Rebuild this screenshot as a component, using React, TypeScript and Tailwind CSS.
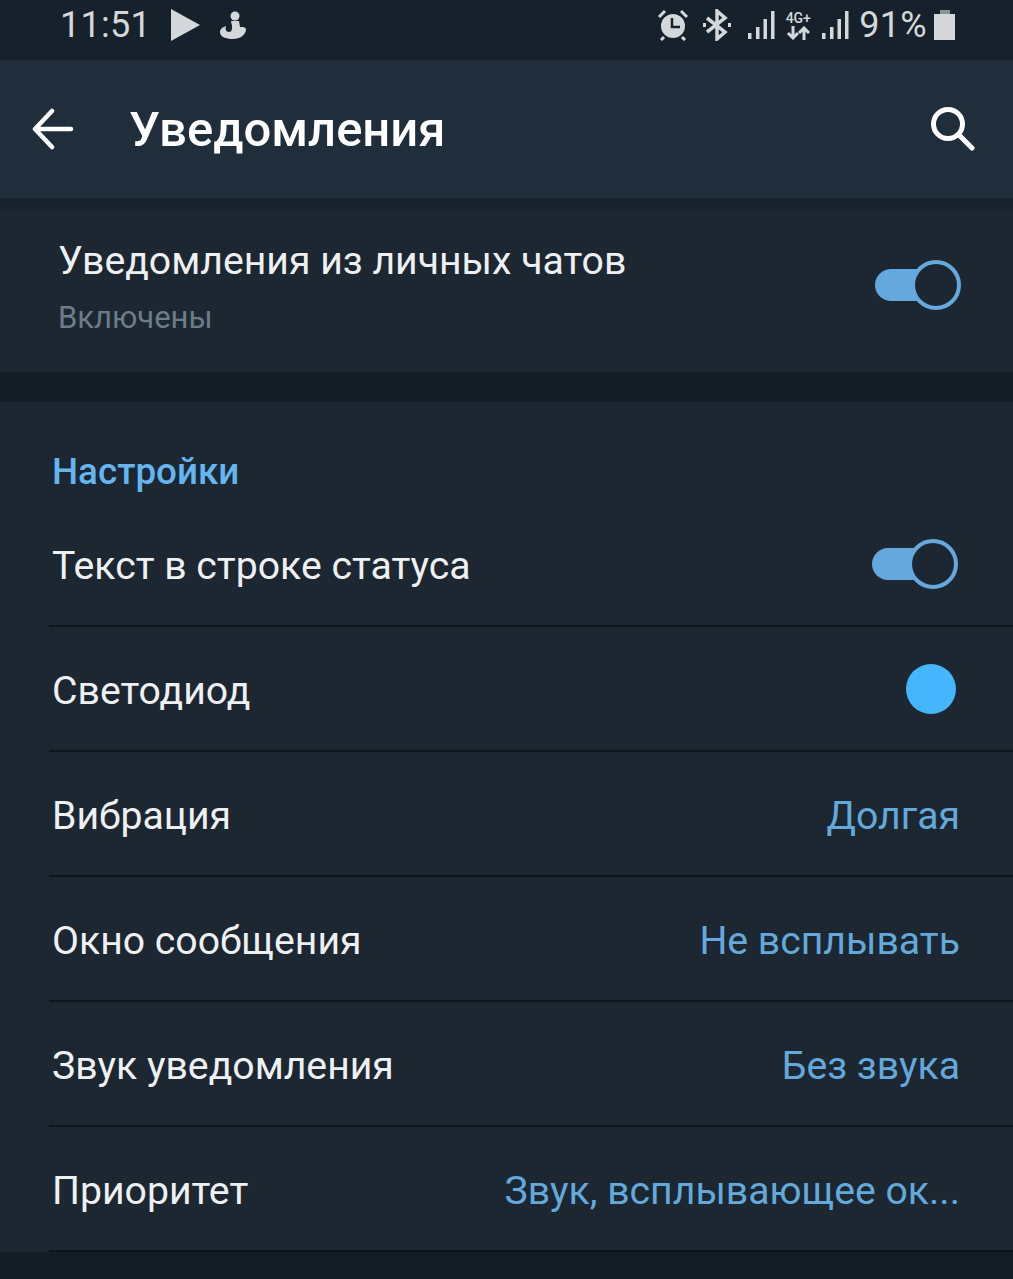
const ROWS = [
    { label: 'Вибрация', value: 'Долгая' },
    { label: 'Окно сообщения', value: 'Не всплывать' },
    { label: 'Звук уведомления', value: 'Без звука' },
    { label: 'Приоритет', value: 'Звук, всплывающее ок...' },
]

function Toggle() {
    return (
        <div className="relative h-[50px] w-[86px]">
            <div className="absolute left-0 top-[9px] h-[32px] w-[60px] rounded-full bg-[#64a8dd]" />
            <div className="absolute right-0 top-0 h-[50px] w-[50px] rounded-full border-[4px] border-[#64a8dd] bg-[#1c2732]" />
        </div>
    )
}

function Signal() {
    return (
        <svg width="27" height="30" viewBox="0 0 27 30" fill="#d5d8da">
            <rect x="0" y="23" width="3.5" height="6" />
            <rect x="8" y="17" width="3.5" height="12" />
            <rect x="15.5" y="9" width="3.5" height="20" />
            <rect x="23" y="1" width="3.5" height="28" />
        </svg>
    )
}

function StatusBar() {
    return (
        <div className="flex h-[60px] items-center justify-between bg-[#17212b] pb-[10px] pl-[60px] pr-[58px] text-[#d5d8da]">
            <div className="flex items-center">
                <span className="text-[36px] leading-none tracking-[0.3px]">11:51</span>
                <svg className="ml-[20px]" width="30" height="34" viewBox="0 0 30 34" fill="#d5d8da">
                    <path d="M0 1 L29 17 L0 33 Z" />
                </svg>
                <svg className="ml-[19px]" width="26" height="30" viewBox="0 0 26 30" fill="#d5d8da">
                    <circle cx="15" cy="6" r="4.5" />
                    <path d="M11 11 h8 l1 6 c3 0 5 0 6 2 c0 6 -6 10 -13 10 c-7 0 -13 -2 -13 -7 c0 -3 3 -5 6 -6 c-1 3 0 6 3 6 c3 0 3 -3 3 -6 c0 -2 -1 -3 -1 -5 Z" />
                </svg>
            </div>
            <div className="flex items-center">
                <svg width="32" height="32" viewBox="0 0 32 32" fill="none">
                    <circle cx="16" cy="17" r="12" fill="#d5d8da" />
                    <path d="M15 9 V18 H23" stroke="#17212b" strokeWidth="2.5" />
                    <path d="M2 8 L8 2 M30 8 L24 2 M7 28 L4 31 M25 28 L28 31" stroke="#d5d8da" strokeWidth="3" />
                </svg>
                <svg className="ml-[14px]" width="28" height="32" viewBox="0 0 28 32" fill="none" stroke="#d5d8da" strokeWidth="3.5">
                    <path d="M4 9 L22 23 L14 30 V2 L22 9 L4 23" />
                    <path d="M0 16 h3 M25 16 h3" strokeWidth="4" />
                </svg>
                <div className="ml-[17px]"><Signal /></div>
                <div className="ml-[8px] flex w-[30px] flex-col items-center">
                    <span className="text-[14px] font-medium leading-[15px]">4G+</span>
                    <svg width="24" height="14" viewBox="0 0 24 14" fill="none" stroke="#d5d8da" strokeWidth="3">
                        <path d="M7 0 V12 M2 7 L7 12 L12 7" />
                        <path d="M18 14 V2 M13 7 L18 2 L23 7" />
                    </svg>
                </div>
                <div className="ml-[9px]"><Signal /></div>
                <span className="ml-[10px] text-[36px] leading-none tracking-[0.3px]">91%</span>
                <div className="ml-[7px] flex flex-col items-center">
                    <div className="h-[4px] w-[10px] bg-[#8d9296]" />
                    <div className="h-[26px] w-[21px] bg-[#d5d8da]" />
                </div>
            </div>
        </div>
    )
}

export default function App() {
    return (
        <div className="flex h-[1279px] flex-col overflow-hidden bg-[#131c24] font-['Roboto',sans-serif]">
            <StatusBar />
            <div className="flex h-[138px] items-center justify-between bg-[#202d3a] pl-[32px] pr-[38px] text-white">
                <div className="flex items-center">
                    <svg width="42" height="42" viewBox="0 0 42 42" fill="none" stroke="#ffffff" strokeWidth="4.5" strokeLinecap="round" strokeLinejoin="round">
                        <path d="M39 21 H4 M20 3 L3 21 L20 39" />
                    </svg>
                    <h1 className="ml-[55px] text-[49px] font-medium leading-none">Уведомления</h1>
                </div>
                <svg width="44" height="44" viewBox="0 0 44 44" fill="none" stroke="#ffffff" strokeWidth="5" strokeLinecap="round">
                    <circle cx="17" cy="17" r="14.5" />
                    <path d="M28 28 L41 41" />
                </svg>
            </div>
            <div className="h-[12px] bg-[#19232d]" />
            <div className="flex h-[162px] items-center justify-between bg-[#1c2732] pb-[12px] pl-[58px] pr-[52px]">
                <div className="pt-[4px]">
                    <div className="text-[39.2px] leading-[46px] text-[#eef0f2]">Уведомления из личных чатов</div>
                    <div className="mt-[16px] text-[31px] leading-[36px] text-[#6d7c8a]">Включены</div>
                </div>
                <Toggle />
            </div>
            <div className="h-[30px] shrink-0" />
            <div className="bg-[#1c2732]">
                <div className="pl-[52px] pt-[49px] text-[36.8px] font-medium leading-[42px] text-[#64b5f0]">Настройки</div>
                <div className="ml-[49px]">
                    <div className="flex h-[134px] items-center justify-between border-b-2 border-[#0e151c] pl-[3px] pr-[55px] pt-[10px]">
                        <span className="pt-[4px] text-[39.2px] text-[#eef0f2]">Текст в строке статуса</span>
                        <Toggle />
                    </div>
                    <div className="flex h-[125px] items-center justify-between border-b-2 border-[#0e151c] pl-[3px] pr-[57px]">
                        <span className="pt-[5px] text-[39.2px] text-[#eef0f2]">Светодиод</span>
                        <div className="h-[50px] w-[50px] rounded-full bg-[#45b6fe]" />
                    </div>
                    {ROWS.map(r => (
                        <div key={r.label} className="flex h-[125px] items-center justify-between border-b-2 border-[#0e151c] pl-[3px] pr-[53px]">
                            <span className="pt-[5px] text-[39.2px] text-[#eef0f2]">{r.label}</span>
                            <span className="pt-[5px] text-[39.2px] text-[#64a9dc]">{r.value}</span>
                        </div>
                    ))}
                </div>
            </div>
        </div>
    )
}
